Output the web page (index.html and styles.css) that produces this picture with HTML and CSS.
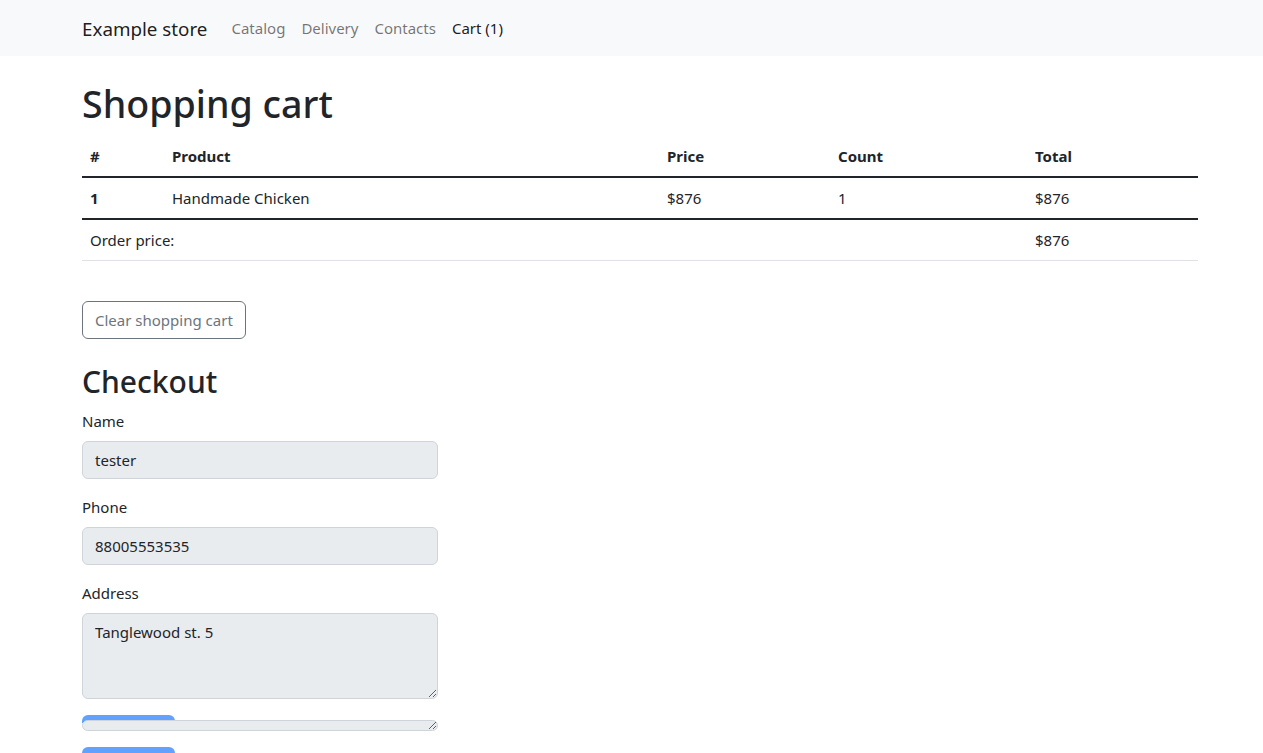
FILE: index.html
```html
<!DOCTYPE html>
<html lang="en">
<head>
<meta charset="utf-8">
<title>Shopping cart</title>
<link rel="stylesheet" href="styles.css">
</head>
<body>
<nav class="navbar">
  <div class="container nav-inner">
    <a class="brand" href="#">Example store</a>
    <ul class="nav-links">
      <li><a class="nav-link" href="#">Catalog</a></li>
      <li><a class="nav-link" href="#">Delivery</a></li>
      <li><a class="nav-link" href="#">Contacts</a></li>
      <li><a class="nav-link active" href="#">Cart (1)</a></li>
    </ul>
  </div>
</nav>
<main class="container">
  <h1 class="title">Shopping cart</h1>
  <table class="cart-table">
    <colgroup>
      <col class="c-num"><col class="c-prod"><col class="c-price"><col class="c-count"><col class="c-total">
    </colgroup>
    <thead>
      <tr><th>#</th><th>Product</th><th>Price</th><th>Count</th><th>Total</th></tr>
    </thead>
    <tbody class="divider">
      <tr><th>1</th><td>Handmade Chicken</td><td>$876</td><td>1</td><td>$876</td></tr>
    </tbody>
    <tfoot class="divider">
      <tr class="foot-row"><td colspan="4">Order price:</td><td>$876</td></tr>
    </tfoot>
  </table>
  <button class="btn-outline" type="button">Clear shopping cart</button>
  <h2 class="subtitle">Checkout</h2>
  <form class="checkout">
    <div class="field">
      <label class="form-label">Name</label>
      <input class="form-control" type="text" value="tester" disabled>
    </div>
    <div class="field">
      <label class="form-label">Phone</label>
      <input class="form-control" type="text" value="88005553535" disabled>
    </div>
    <div class="field">
      <label class="form-label">Address</label>
      <textarea class="form-control area" disabled>Tanglewood st. 5</textarea>
    </div>
    <div class="field glitch">
      <div class="blue-tab"></div>
      <textarea class="form-control strip" disabled></textarea>
    </div>
    <button class="btn-primary" type="button" disabled></button>
  </form>
</main>
</body>
</html>
```

FILE: styles.css
```css
* { box-sizing: border-box; }
html, body { margin: 0; padding: 0; }
body {
  font-family: "Noto Sans", "Open Sans", sans-serif;
  font-size: 15px;
  line-height: 24px;
  color: #212529;
  background: #fff;
  overflow: hidden;
}
.container {
  width: 1116px;
  margin-left: 82px;
}
.navbar {
  background: #f8f9fa;
  height: 56px;
}
.nav-inner {
  display: flex;
  align-items: center;
  height: 56px;
}
.brand {
  font-size: 18.8px;
  line-height: 30px;
  color: rgba(0,0,0,.9);
  text-decoration: none;
  margin-right: 16px;
  padding-top: 2px;
}
.nav-links {
  display: flex;
  list-style: none;
  margin: 0;
  padding: 0;
}
.nav-link {
  display: block;
  padding: 8px;
  color: rgba(0,0,0,.55);
  text-decoration: none;
}
.nav-link.active { color: rgba(0,0,0,.9); }
.title {
  font-size: 37.6px;
  line-height: 48px;
  font-weight: 500;
  margin: 24px 0 8px;
}
.cart-table {
  width: 100%;
  border-collapse: collapse;
  margin-bottom: 16px;
}
.c-num { width: 82px; }
.c-prod { width: 495px; }
.c-price { width: 171px; }
.c-count { width: 197px; }
.c-total { width: 171px; }
.cart-table th, .cart-table td {
  padding: 8px;
  text-align: left;
  border-bottom: 1px solid #dee2e6;
  line-height: 24px;
}
.cart-table thead th { border-bottom: 0; }
.cart-table tbody td, .cart-table tbody th { border-bottom: 0; }
.cart-table th { font-weight: 700; }
.divider { border-top: 2px solid #212529; }
.btn-outline {
  font: inherit;
  line-height: 24px;
  padding: 6px 12px;
  border: 1px solid #6c757d;
  color: #6c757d;
  background: transparent;
  border-radius: 6px;
  margin-top: 40px;
  display: block;
}
.subtitle {
  font-size: 30px;
  line-height: 38.4px;
  font-weight: 500;
  margin: 24px 0 8px;
}
.checkout { width: 356px; }
.field { margin-bottom: 16px; }
.form-label {
  display: block;
  margin-bottom: 8px;
}
.form-control {
  display: block;
  width: 100%;
  font: inherit;
  line-height: 24px;
  color: #212529;
  padding: 6px 12px;
  background: #e9ecef;
  border: 1px solid #ced4da;
  border-radius: 6px;
  margin: 0;
}
.area {
  height: 86px;
  resize: vertical;
}
.glitch { position: relative; padding-top: 5px; }
.blue-tab {
  position: absolute;
  top: 0;
  left: 0;
  width: 93px;
  height: 8px;
  background: #62a1fe;
  border-radius: 6px 6px 0 0;
}
.strip {
  position: relative;
  height: 11px;
  padding: 0;
  resize: vertical;
}
.btn-primary {
  display: block;
  width: 93px;
  height: 38px;
  border: 0;
  border-radius: 6px;
  background: #62a1fe;
  padding: 0;
}
```
